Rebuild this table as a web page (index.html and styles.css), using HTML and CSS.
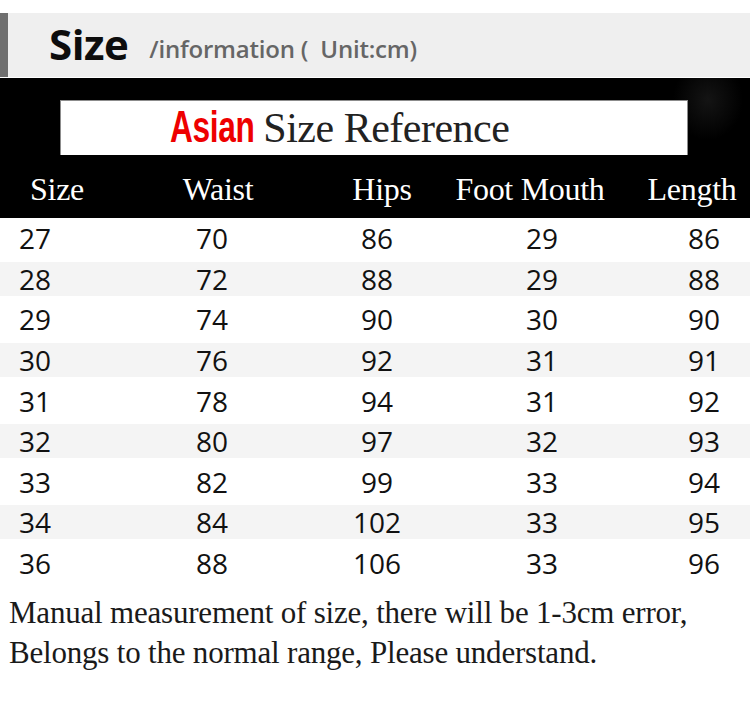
FILE: index.html
```html
<!DOCTYPE html>
<html>
<head>
<meta charset="utf-8">
<link rel="stylesheet" href="styles.css">
</head>
<body>
<div class="page">
  <div class="topband">
    <div class="bar"></div>
    <div class="heading">
      <span class="big">Size</span>
      <span class="sub">/information (&nbsp; Unit:cm)</span>
    </div>
  </div>
  <div class="black">
    <div class="titlebox">
      <span class="asian">Asian</span><span class="ref">Size Reference</span>
    </div>
    <div class="grid head">
      <div>Size</div><div>Waist</div><div>Hips</div><div>Foot Mouth</div><div>Length</div>
    </div>
  </div>
  <div class="rows">
    <div class="grid row"><div>27</div><div>70</div><div>86</div><div>29</div><div>86</div></div>
    <div class="grid row alt"><div>28</div><div>72</div><div>88</div><div>29</div><div>88</div></div>
    <div class="grid row"><div>29</div><div>74</div><div>90</div><div>30</div><div>90</div></div>
    <div class="grid row alt"><div>30</div><div>76</div><div>92</div><div>31</div><div>91</div></div>
    <div class="grid row"><div>31</div><div>78</div><div>94</div><div>31</div><div>92</div></div>
    <div class="grid row alt"><div>32</div><div>80</div><div>97</div><div>32</div><div>93</div></div>
    <div class="grid row"><div>33</div><div>82</div><div>99</div><div>33</div><div>94</div></div>
    <div class="grid row alt"><div>34</div><div>84</div><div>102</div><div>33</div><div>95</div></div>
    <div class="grid row"><div>36</div><div>88</div><div>106</div><div>33</div><div>96</div></div>
  </div>
  <div class="note">
    <p>Manual measurement of size, there will be 1-3cm error,</p>
    <p>Belongs to the normal range, Please understand.</p>
  </div>
</div>
</body>
</html>
```

FILE: styles.css
```css
html, body {
  margin: 0;
  padding: 0;
  background: #ffffff;
}
.page {
  width: 750px;
  height: 707px;
  overflow: hidden;
  padding-top: 13px;
  box-sizing: border-box;
}
.topband {
  display: flex;
  height: 64px;
  background: #efefef;
  margin-bottom: 1px;
}
.bar {
  width: 8px;
  background: #6f6f6f;
}
.heading {
  display: flex;
  align-items: baseline;
  padding-left: 41px;
  padding-top: 2px;
  font-family: "Open Sans", sans-serif;
}
.big {
  font-size: 42px;
  font-weight: 700;
  color: #0d0d0d;
  letter-spacing: -0.5px;
}
.sub {
  font-size: 24px;
  font-weight: 600;
  color: #666666;
  margin-left: 21px;
  position: relative;
  top: -2px;
  letter-spacing: -0.2px;
}
.black {
  height: 140px;
  background: radial-gradient(ellipse 35px 40px at 708px 22px, #141414, #000000 100%);
  background-color: #000;
  padding-top: 22px;
  box-sizing: border-box;
}
.titlebox {
  margin-left: 60px;
  width: 628px;
  height: 55px;
  box-sizing: border-box;
  background: #ffffff;
  border-top: 1px solid #8c8c8c;
  border-left: 1px solid #8c8c8c;
  border-right: 1px solid #8c8c8c;
  padding-left: 109px;
  display: flex;
  align-items: baseline;
  white-space: nowrap;
}
.asian {
  display: inline-block;
  font-family: "Liberation Sans", Arial, sans-serif;
  font-weight: 700;
  font-size: 44px;
  line-height: 52px;
  color: #ee0000;
  transform: scaleX(0.72);
  transform-origin: left center;
  margin-right: -24px;
  letter-spacing: -0.5px;
}
.ref {
  font-family: "Liberation Serif", "Times New Roman", serif;
  font-size: 42px;
  line-height: 52px;
  color: #222222;
  letter-spacing: -0.5px;
}
.grid {
  display: grid;
  grid-template-columns: 124px 170px 166px 164px 126px;
  text-align: center;
  white-space: nowrap;
}
.head {
  height: 63px;
  align-items: start;
  padding-top: 16px;
  box-sizing: border-box;
  font-family: "Liberation Serif", "Times New Roman", serif;
  font-size: 32px;
  line-height: 36px;
  color: #ffffff;
  letter-spacing: -0.3px;
}
.head div:nth-child(1) { padding-right: 10px; }
.head div:nth-child(2) { padding-left: 18px; }
.head div:nth-child(3) { padding-left: 10px; }
.head div:nth-child(4) { margin-left: -12px; padding-right: 12px; }
.head div:nth-child(5) { padding-left: 10px; }
.row {
  height: 40.6px;
  box-sizing: border-box;
  padding: 3.3px 0;
  background-clip: content-box;
  font-family: "Open Sans", sans-serif;
  font-size: 28px;
  line-height: 34px;
  color: #111111;
}
.row.alt {
  background-color: #f4f4f4;
}
.row div:nth-child(1) { padding-right: 54px; }
.row div:nth-child(2) { padding-left: 6px; }
.row div:nth-child(5) { padding-left: 34px; }
.note {
  margin-top: 10px;
  padding-left: 9px;
  font-family: "Liberation Serif", "Times New Roman", serif;
  font-size: 31px;
  line-height: 40px;
  color: #1a1a1a;
  letter-spacing: -0.2px;
}
.note p {
  margin: 0;
  white-space: nowrap;
}
```
